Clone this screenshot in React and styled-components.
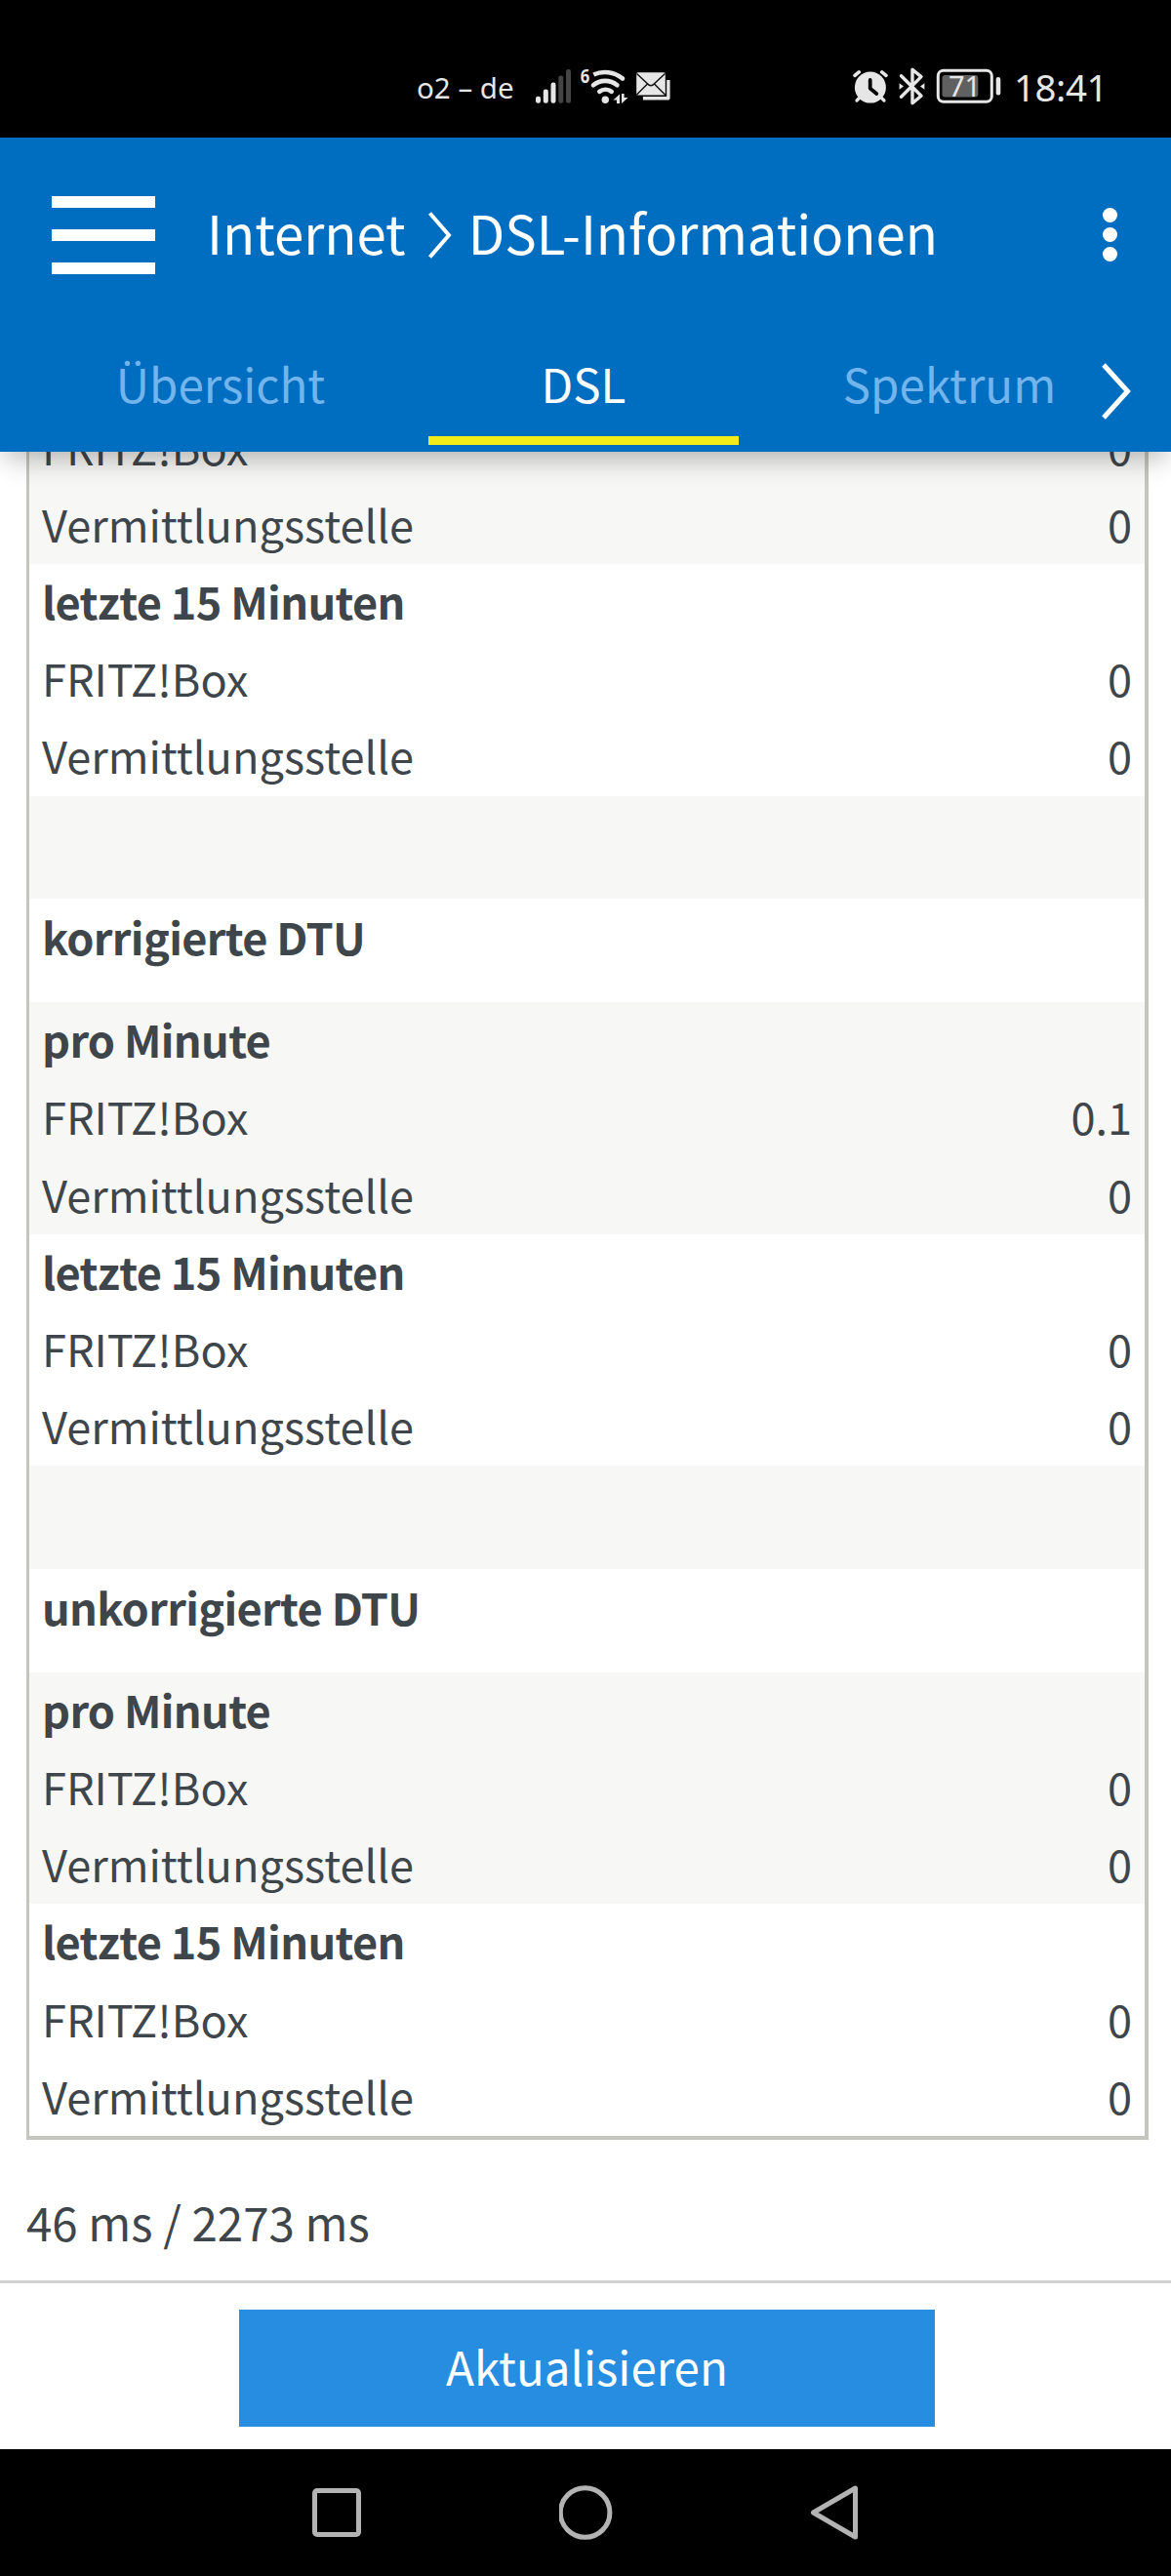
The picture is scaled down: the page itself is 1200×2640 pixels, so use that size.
import React from 'react';
import styled, { createGlobalStyle } from 'styled-components';

const GlobalStyle = createGlobalStyle`
  * {
    box-sizing: border-box;
  }

  body {
    margin: 0;
    background: #fff;
    color: #3f464b;
    font-family: "Noto Sans CJK SC", "Noto Sans", sans-serif;
  }
`;

const Screen = styled.div`
  display: flex;
  flex-direction: column;
  width: 1200px;
  height: 2640px;
  overflow: hidden;
`;

/* ---------- phone status bar ---------- */

const StatusBar = styled.div`
  display: flex;
  justify-content: space-between;
  flex: none;
  height: 141px;
  padding: 65px 69px 0 426px;
  background: #000;
  color: #e6e6e6;
  font-family: "Noto Sans", sans-serif;

  svg {
    display: block;
    flex: none;
  }
`;

const StatusGroup = styled.div`
  display: flex;
  height: 46px;
`;

const Carrier = styled.span`
  width: 123px;
  padding-left: 1px;
  font-size: 29.5px;
  line-height: 50px;
  white-space: nowrap;
`;

const Clock = styled.span`
  width: 92px;
  margin-left: 11px;
  font-size: 38.4px;
  line-height: 49px;
  letter-spacing: -0.4px;
  white-space: nowrap;
`;

/* ---------- blue header ---------- */

const Header = styled.header`
  position: relative;
  z-index: 1;
  flex: none;
  height: 322px;
  background: #006ec0;
  color: #fff;
  box-shadow: 0 12px 27px -6px rgba(0, 0, 0, 0.3);
`;

const TitleRow = styled.div`
  display: flex;
  align-items: center;
  height: 200px;
  padding: 0 55px 0 53px;
`;

const MenuButton = styled.div`
  display: flex;
  flex-direction: column;
  gap: 22px;
  width: 106px;
`;

const MenuBar = styled.span`
  height: 12px;
  background: #fff;
`;

const Breadcrumb = styled.h1`
  display: flex;
  align-items: center;
  flex: 1;
  margin: 0;
  padding-left: 53px;
  font-size: 54.5px;
  font-weight: 400;
  line-height: 80px;
  white-space: nowrap;

  svg {
    margin: 0 16px 0 22px;
  }
`;

const Crumb = styled.span`
  padding-bottom: 6px;
`;

const MoreButton = styled.div`
  display: flex;
  flex-direction: column;
  gap: 5px;
  padding-bottom: 1px;
`;

const Dot = styled.span`
  width: 15px;
  height: 15px;
  border-radius: 50%;
  background: #fff;
`;

const TabRow = styled.nav`
  display: grid;
  grid-template-columns: 372px 372px 378px;
  height: 115px;
  padding-left: 40px;
`;

const Tab = styled.div`
  display: flex;
  flex-direction: column;
  align-items: center;
  color: ${(props) => (props.$active ? '#fff' : '#72b4ec')};
  font-size: 47.5px;
  line-height: 103px;

  &::after {
    content: "";
    width: 318px;
    height: 9px;
    margin-top: 3px;
    background: ${(props) => (props.$active ? '#f3ec19' : 'transparent')};
  }
`;

const TabArrow = styled.div`
  position: absolute;
  right: 41px;
  bottom: 33px;

  svg {
    display: block;
  }
`;

/* ---------- scrolled content ---------- */

const Content = styled.main`
  display: flex;
  flex-direction: column;
  justify-content: flex-end;
  flex: none;
  height: 1874px;
  padding: 0 23px 0 27px;
  overflow: hidden;
`;

const Table = styled.div`
  flex: none;
  border: solid #c5c5bf;
  border-width: 0 4px 4px 3px;
`;

const Row = styled.div`
  display: flex;
  justify-content: space-between;
  height: ${(props) => (props.$tall ? '105.8px' : '79.2px')};
  padding: ${(props) => (props.$tall ? '1px' : '0')} 13px 0;
  background: ${(props) => (props.$shaded ? '#f7f7f5' : '#fff')};
  font-size: 45.1px;
  line-height: 76px;
`;

const Heading = styled.strong`
  font-weight: 700;
  letter-spacing: -0.66px;
`;

const Timing = styled.p`
  flex: none;
  height: 144px;
  margin: 0;
  padding-top: 44px;
  font-size: 47.5px;
  line-height: 80px;
`;

const Footer = styled.footer`
  flex: none;
  height: 173px;
  padding: 27px 242px 0 245px;
  border-top: 3px solid #d2d2d2;
`;

const RefreshButton = styled.button`
  display: block;
  width: 100%;
  height: 120px;
  padding: 0 0 5px;
  border: 0;
  background: #268de0;
  color: #fff;
  font: 400 47.5px "Noto Sans CJK SC", "Noto Sans", sans-serif;
`;

const NavBar = styled.div`
  display: flex;
  align-items: center;
  flex: none;
  gap: 200px;
  height: 130px;
  padding-left: 317px;
  background: #000;
`;

const rows = [
  { label: 'FRITZ!Box', value: '0', shaded: true },
  { label: 'Vermittlungsstelle', value: '0', shaded: true },
  { heading: 'letzte 15 Minuten' },
  { label: 'FRITZ!Box', value: '0' },
  { label: 'Vermittlungsstelle', value: '0' },
  { tall: true, shaded: true },
  { heading: 'korrigierte DTU', tall: true },
  { heading: 'pro Minute', shaded: true },
  { label: 'FRITZ!Box', value: '0.1', shaded: true },
  { label: 'Vermittlungsstelle', value: '0', shaded: true },
  { heading: 'letzte 15 Minuten' },
  { label: 'FRITZ!Box', value: '0' },
  { label: 'Vermittlungsstelle', value: '0' },
  { tall: true, shaded: true },
  { heading: 'unkorrigierte DTU', tall: true },
  { heading: 'pro Minute', shaded: true },
  { label: 'FRITZ!Box', value: '0', shaded: true },
  { label: 'Vermittlungsstelle', value: '0', shaded: true },
  { heading: 'letzte 15 Minuten' },
  { label: 'FRITZ!Box', value: '0' },
  { label: 'Vermittlungsstelle', value: '0' },
];

const signalBars = [
  { x: 549, y: 98.7, on: true },
  { x: 556.8, y: 91.5, on: true },
  { x: 564.5, y: 84.5, on: true },
  { x: 572.3, y: 77.5, on: false },
  { x: 580, y: 71, on: false },
];

function SignalIcon() {
  return (
    <svg width="46" height="46" viewBox="549 65 46 46">
      {signalBars.map((bar) => (
        <rect
          key={bar.x}
          x={bar.x}
          y={bar.y}
          width="5"
          height={105.8 - bar.y}
          rx="2.3"
          fill={bar.on ? '#e6e6e6' : '#454545'}
        />
      ))}
    </svg>
  );
}

function WifiIcon() {
  return (
    <svg width="56" height="46" viewBox="595 65 56 46" fill="#e6e6e6">
      <text x="594.8" y="84.6" fontSize="20" fontWeight="700" fontFamily="Noto Sans" textLength="9.5" lengthAdjust="spacingAndGlyphs">6</text>
      <g fill="none" stroke="#e6e6e6" strokeWidth="4.6">
        <path d="M608.3 76.5A28 28 0 0 1 637.6 80.3" />
        <path d="M638 80.6l0 0M608 87.2A19.3 19.3 0 0 1 632.4 87.2" strokeLinecap="round" />
        <path d="M614.3 93.8A10.3 10.3 0 0 1 626.7 93.8" strokeLinecap="round" />
      </g>
      <circle cx="620.3" cy="102.2" r="3.7" />
      <path d="M635 96.5l-6.5 6h3.5v3.5h3z" />
      <path d="M637 96h2.6v4h4l-6.6 6z" />
    </svg>
  );
}

function MailIcon() {
  return (
    <svg width="38" height="46" viewBox="651 65 38 46">
      <path d="M684.9 82v18.7h-26" fill="none" stroke="#e6e6e6" strokeWidth="3.4" strokeLinejoin="round" />
      <rect x="652.2" y="74.2" width="29.6" height="23.4" rx="1.5" fill="#e6e6e6" />
      <path d="M652.5 75.5l11 10.3q3.5 4 7 0l11-10.3M652.5 97l11-11M681.5 97l-11-11" fill="none" stroke="#111" strokeWidth="1.5" />
    </svg>
  );
}

function AlarmIcon() {
  return (
    <svg width="44" height="46" viewBox="875 65 44 46" fill="none" stroke="#e6e6e6" strokeLinecap="round">
      <path d="M877 77.3l4.2-3.4M909 77.3l-4.2-3.4" strokeWidth="3.6" />
      <path d="M882 100l-3 3M904 100l3 3" strokeWidth="3.2" />
      <circle cx="892.9" cy="89.6" r="16" fill="#e6e6e6" stroke="none" />
      <path d="M892.7 82v8.6l6.6 5.4" stroke="#000" strokeWidth="3.8" strokeLinejoin="round" />
    </svg>
  );
}

function BluetoothIcon() {
  return (
    <svg width="40" height="46" viewBox="919 65 40 46" fill="none" stroke="#e6e6e6" strokeWidth="3.4" strokeLinecap="round" strokeLinejoin="round">
      <path d="M924.5 77.7l20.5 20.6-9 7.4V71.2l9 7.4-20.5 20.6" />
      <path d="M922.6 85.3l4.4 3.2-4.4 3.2zM948.4 85.3l-4.4 3.2 4.4 3.2z" fill="#e6e6e6" stroke="none" />
    </svg>
  );
}

function BatteryIcon() {
  return (
    <svg width="70" height="46" viewBox="959 65 70 46">
      <rect x="962.3" y="72.2" width="55" height="32" rx="5.5" fill="none" stroke="#e6e6e6" strokeWidth="3" />
      <rect x="966.5" y="77" width="36.8" height="22.4" rx="3" fill="#606060" />
      <rect x="1021.7" y="79" width="4.6" height="18.5" rx="2.2" fill="#e6e6e6" />
      <text x="973" y="99" fontSize="29" fontFamily="Noto Sans" fill="#e6e6e6">71</text>
    </svg>
  );
}

export default function App() {
  return (
    <>
      <GlobalStyle />
      <Screen>
        <StatusBar>
          <StatusGroup>
            <Carrier>o2 – de</Carrier>
            <SignalIcon />
            <WifiIcon />
            <MailIcon />
          </StatusGroup>
          <StatusGroup>
            <AlarmIcon />
            <BluetoothIcon />
            <BatteryIcon />
            <Clock>18:41</Clock>
          </StatusGroup>
        </StatusBar>

        <Header>
          <TitleRow>
            <MenuButton>
              <MenuBar />
              <MenuBar />
              <MenuBar />
            </MenuButton>
            <Breadcrumb>
              <Crumb>Internet</Crumb>
              <svg width="26" height="50" viewBox="0 0 26 50" fill="none" stroke="#fff" strokeWidth="4">
                <path d="M2.5 2.5L22 25 2.5 47.5" />
              </svg>
              <Crumb>DSL-Informationen</Crumb>
            </Breadcrumb>
            <MoreButton>
              <Dot />
              <Dot />
              <Dot />
            </MoreButton>
          </TitleRow>
          <TabRow>
            <Tab>Übersicht</Tab>
            <Tab $active>DSL</Tab>
            <Tab>Spektrum</Tab>
          </TabRow>
          <TabArrow>
            <svg width="30" height="58" viewBox="0 0 30 58" fill="none" stroke="#fff" strokeWidth="5">
              <path d="M2 2l24.5 27L2 56" />
            </svg>
          </TabArrow>
        </Header>

        <Content>
          <Table>
            {rows.map((row, i) => (
              <Row key={i} $tall={row.tall} $shaded={row.shaded}>
                {row.heading && <Heading>{row.heading}</Heading>}
                {row.label && <span>{row.label}</span>}
                {row.value && <span>{row.value}</span>}
              </Row>
            ))}
          </Table>
          <Timing>46 ms / 2273 ms</Timing>
        </Content>

        <Footer>
          <RefreshButton>Aktualisieren</RefreshButton>
        </Footer>

        <NavBar>
          <svg width="56" height="56" viewBox="0 0 56 56" fill="none" stroke="#b3b3b3" strokeWidth="5">
            <rect x="5.5" y="5.5" width="45" height="45" rx="2.5" />
          </svg>
          <svg width="56" height="56" viewBox="0 0 56 56" fill="none" stroke="#b3b3b3" strokeWidth="5">
            <circle cx="26.6" cy="28" r="25.3" />
          </svg>
          <svg width="56" height="56" viewBox="0 0 56 56" fill="none" stroke="#b3b3b3" strokeWidth="5" strokeLinejoin="round">
            <path d="M47.5 3v50L4.5 28z" />
          </svg>
        </NavBar>
      </Screen>
    </>
  );
}
